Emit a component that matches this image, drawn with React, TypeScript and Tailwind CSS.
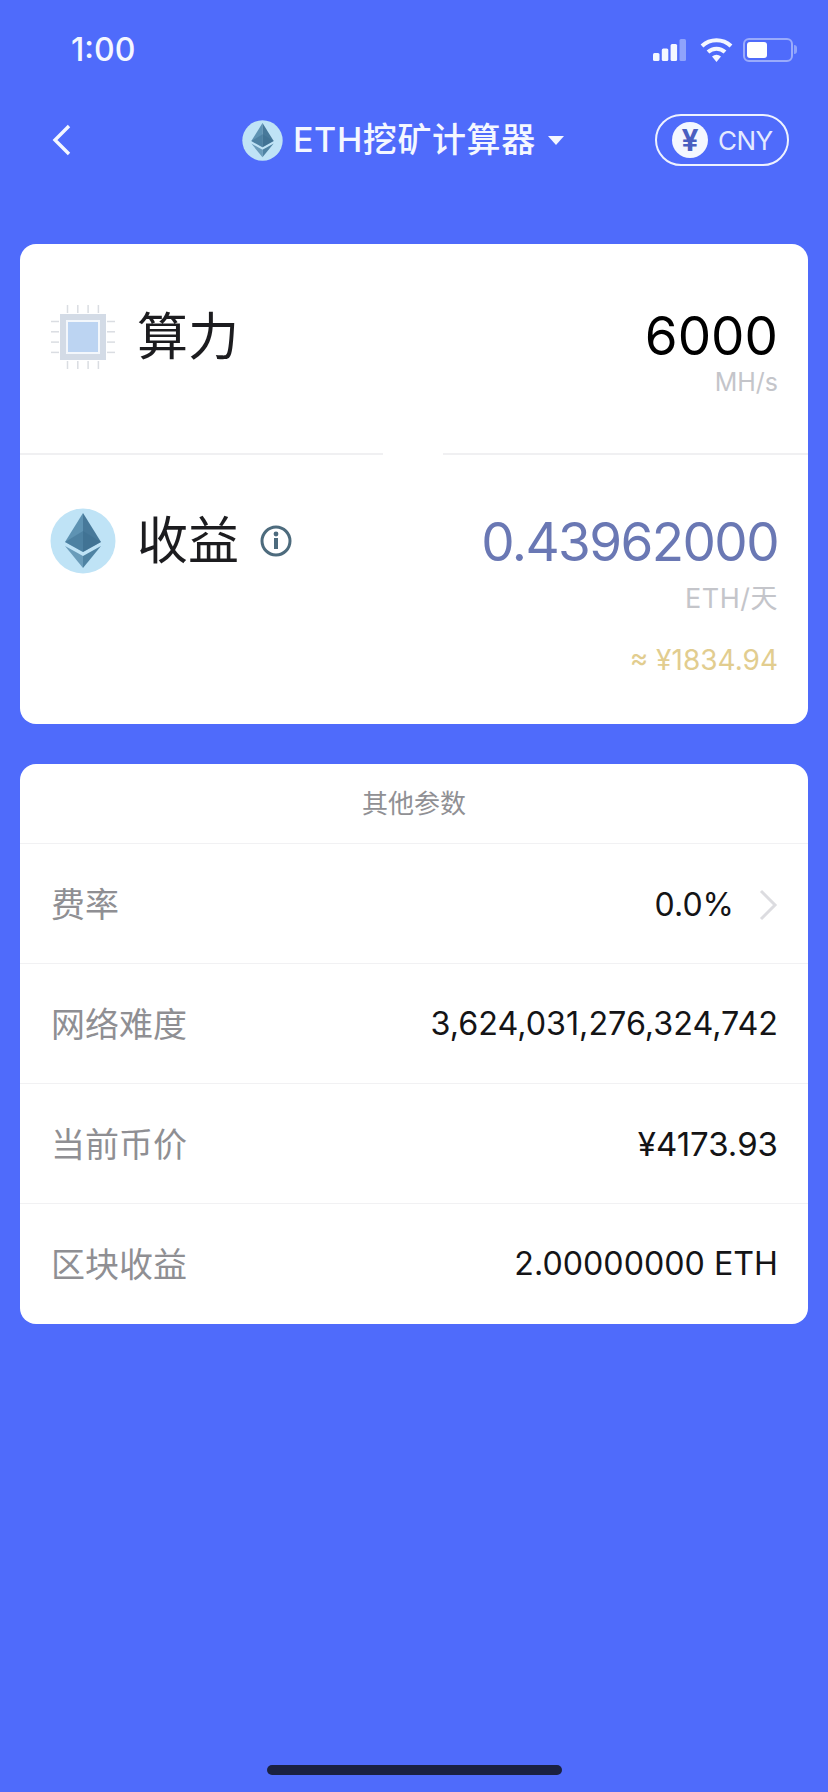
const SANS = "font-['Inter','Liberation_Sans','Noto_Sans_CJK_SC',sans-serif]";

function EthGlyph({ size }: { size: number }) {
  return (
    <svg width={size} height={size} viewBox="0 0 66 66" aria-hidden="true">
      <circle cx="33" cy="33" r="32.5" fill="#bfe3f6" />
      <path d="M33 5 L15 34 L33 44 Z" fill="#5e93b3" />
      <path d="M33 5 L51 34 L33 44 Z" fill="#47799a" />
      <path d="M33 23 L15 34 L33 44 L51 34 Z" fill="#3a6d8e" opacity="0.45" />
      <path d="M15 38 L33 48 L33 60 Z" fill="#6a9cba" />
      <path d="M51 38 L33 48 L33 60 Z" fill="#4f83a3" />
    </svg>
  );
}

function ChipIcon() {
  const pins = [0, 1, 2, 3];
  return (
    <svg width="66" height="66" viewBox="0 0 66 66" aria-hidden="true">
      {pins.map((i) => (
        <g key={i} stroke="#dadde2" strokeWidth="1.5">
          <line x1={17.5 + i * 10.3} y1="1" x2={17.5 + i * 10.3} y2="9" />
          <line x1={17.5 + i * 10.3} y1="57" x2={17.5 + i * 10.3} y2="65" />
          <line x1="1" y1={17.5 + i * 10.3} x2="9" y2={17.5 + i * 10.3} />
          <line x1="57" y1={17.5 + i * 10.3} x2="65" y2={17.5 + i * 10.3} />
        </g>
      ))}
      <rect x="10" y="10" width="46" height="46" fill="#d3dbe6" />
      <rect x="17" y="17" width="32" height="32" fill="#bcd4f2" stroke="#f3f7fc" strokeWidth="2" />
    </svg>
  );
}

function StatusIcons() {
  return (
    <div className="flex items-center">
      <svg width="33" height="22" viewBox="0 0 33 22" aria-hidden="true">
        <rect x="0" y="14" width="6.5" height="8" rx="1.5" fill="#f4f7ff" />
        <rect x="8.8" y="9.5" width="6.5" height="12.5" rx="1.5" fill="#f4f7ff" />
        <rect x="17.6" y="5" width="6.5" height="17" rx="1.5" fill="#f4f7ff" />
        <rect x="26.5" y="0" width="6.5" height="22" rx="1.5" fill="#8fa3fb" />
      </svg>
      <svg className="ml-[14px]" width="33" height="25" viewBox="0 0 33 25" aria-hidden="true">
        <path d="M2 9 A21 21 0 0 1 31 9" fill="none" stroke="#f4f7ff" strokeWidth="4" />
        <path d="M8 15 A12.5 12.5 0 0 1 25 15" fill="none" stroke="#f4f7ff" strokeWidth="4" />
        <path d="M12 19.5 L16.5 25 L21 19.5 A7 7 0 0 0 12 19.5 Z" fill="#f4f7ff" />
      </svg>
      <div className="ml-[10px] flex items-center gap-[1px]">
        <div className="flex h-[24px] w-[50px] rounded-[6px] border-2 border-[#9aabfb] p-[2px]">
          <div className="h-full w-[20px] rounded-[3px] bg-white" />
        </div>
        <div className="h-[9px] w-[3px] rounded-r-full bg-[#8fa3fb]" />
      </div>
    </div>
  );
}

function ParamRow({ label, value, size, chevron }: { label: string; value: string; size: string; chevron?: boolean }) {
  return (
    <div className="flex h-[120px] items-center justify-between border-t border-[#f1f1f3] pl-[31px] pr-[30px] pt-[2px]">
      <span className="text-[34px] text-[#8f8f93]">{label}</span>
      <div className="flex items-center gap-[24px]">
        <span className={`${size} text-[#141416]`}>{value}</span>
        {chevron && (
          <svg width="20" height="32" viewBox="0 0 20 32" aria-hidden="true">
            <path d="M3 2 L17 16 L3 30" fill="none" stroke="#dcdce0" strokeWidth="3" />
          </svg>
        )}
      </div>
    </div>
  );
}

export default function App() {
  return (
    <div className={`${SANS} relative flex h-[1792px] w-[828px] flex-col overflow-hidden bg-[#4f6bfb]`}>
      {/* Status bar */}
      <div className="flex h-[90px] items-start justify-between pl-[71px] pr-[31px] pt-[30px]">
        <span className="text-[32px] leading-[40px] font-medium text-[#f4f7ff]">1:00</span>
        <div className="pt-[7px]">
          <StatusIcons />
        </div>
      </div>

      {/* Navigation bar */}
      <div className="relative flex h-[100px] items-center justify-between pl-[52px] pr-[39px]">
        <svg width="20" height="32" viewBox="0 0 20 32" aria-hidden="true">
          <path d="M17 2 L3 16 L17 30" fill="none" stroke="#f4f7ff" strokeWidth="3.4" />
        </svg>
        <div className="absolute left-[242px] top-[29px] flex items-center">
          <EthGlyph size={41} />
          <span className="ml-[10px] text-[34px] leading-[42px] font-medium tracking-[0.6px] text-[#f4f7ff]">ETH挖矿计算器</span>
          <svg className="ml-[12px]" width="16" height="9" viewBox="0 0 16 9" aria-hidden="true">
            <path d="M0 0 H16 L8 9 Z" fill="#f4f7ff" />
          </svg>
        </div>
        <div className="flex h-[52px] w-[134px] items-center rounded-full border-2 border-[#eef2ff] pl-[15px]">
          <div className="flex h-[36px] w-[36px] items-center justify-center rounded-full bg-[#f4f7ff] text-[30px] leading-none font-bold text-[#4a5fc0]">¥</div>
          <span className="ml-[10px] text-[26px] tracking-[-0.5px] text-[#e4eaff]">CNY</span>
        </div>
      </div>

      {/* Hash rate and earnings */}
      <div className="mx-[20px] mt-[54px] flex h-[480px] flex-col rounded-[16px] bg-white">
        <div className="flex h-[209px] items-start justify-between pl-[30px] pr-[30px] pt-[60px]">
          <div className="flex items-center">
            <ChipIcon />
            <span className="ml-[21px] text-[51px] leading-[60px] text-[#1c1c1f]">算力</span>
          </div>
          <div className="mt-[1px] flex flex-col items-end">
            <span className="text-[53px] leading-[62px] text-black">6000</span>
            <span className="text-[25px] leading-[30px] text-[#c4c5ca]">MH/s</span>
          </div>
        </div>

        {/* The rule breaks for a short stretch in the middle */}
        <div className="flex h-[2px] justify-between">
          <div className="w-[363px] bg-[#f0f0f2]" />
          <div className="w-[365px] bg-[#f0f0f2]" />
        </div>

        <div className="flex flex-1 items-start justify-between pl-[30px] pr-[30px] pt-[53px]">
          <div className="flex items-center">
            <EthGlyph size={66} />
            <span className="ml-[21px] text-[51px] leading-[60px] text-[#1c1c1f]">收益</span>
            <svg className="ml-[21px]" width="32" height="32" viewBox="0 0 32 32" aria-hidden="true">
              <circle cx="16" cy="16" r="14" fill="none" stroke="#4d6b7d" strokeWidth="3" />
              <circle cx="16" cy="9" r="2.4" fill="#4d6b7d" />
              <rect x="14" y="13" width="4" height="11" fill="#4d6b7d" />
            </svg>
          </div>
          <div className="mt-[4px] flex flex-col items-end">
            <span className="text-[53px] leading-[60px] tracking-[-1.6px] text-[#6a78b4]">0.43962000</span>
            <span className="mt-[9px] text-[27px] leading-[36px] tracking-[0.5px] text-[#c4c5ca]">ETH/天</span>
            <span className="mt-[27px] text-[28px] leading-[32px] text-[#e2cd8f]">≈ ¥1834.94</span>
          </div>
        </div>
      </div>

      {/* Other parameters */}
      <div className="mx-[20px] mt-[40px] flex flex-col rounded-[16px] bg-white pb-[1px]">
        <div className="flex h-[79px] items-center justify-center text-[26px] text-[#909094]">其他参数</div>
        <ParamRow label="费率" value="0.0%" size="text-[32px]" chevron />
        <ParamRow label="网络难度" value="3,624,031,276,324,742" size="text-[32.3px]" />
        <ParamRow label="当前币价" value="¥4173.93" size="text-[33px]" />
        <ParamRow label="区块收益" value="2.00000000 ETH" size="text-[32.2px]" />
      </div>

      {/* Home indicator */}
      <div className="absolute bottom-[17px] left-[267px] h-[10px] w-[295px] rounded-full bg-[#1a2141]" />
    </div>
  );
}
